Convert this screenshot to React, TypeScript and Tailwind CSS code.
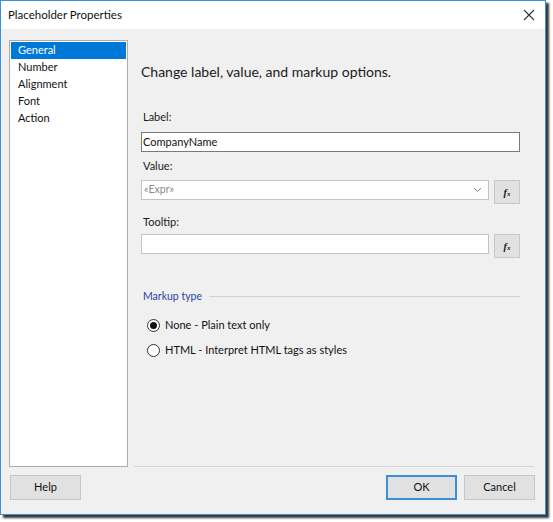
import React from 'react';

const font = { fontFamily: 'Lato, "Noto Sans", sans-serif' };

const FxButton = () => (
  <button className="ml-[5px] w-[26px] h-[24px] bg-[#e1e1e1] border border-[#c8c8c8] flex items-center justify-center">
    <span className="text-[10px] italic font-bold text-[#111]" style={{ fontFamily: '"Liberation Serif", serif' }}>
      f<span className="text-[7px]">x</span>
    </span>
  </button>
);

const Radio = ({ checked, label }: { checked?: boolean; label: string }) => (
  <div className="flex items-center h-[16px]">
    <span className="w-[13px] h-[13px] rounded-full border border-[#333] bg-white flex items-center justify-center">
      {checked && <span className="w-[7px] h-[7px] rounded-full bg-[#111]" />}
    </span>
    <span className="ml-[5px] text-[11px] text-[#111]">{label}</span>
  </div>
);

export default function App() {
  const items = ['General', 'Number', 'Alignment', 'Font', 'Action'];

  return (
    <div className="w-[553px] h-[522px] bg-white" style={font}>
      <div className="w-[546px] h-[515px] border border-[#3d8fd8] flex flex-col shadow-[3px_3px_2px_rgba(20,20,20,0.85)]">
        {/* title bar */}
        <div className="h-[28px] bg-white flex items-center justify-between pl-[7px] pr-[10px]">
          <span className="text-[11.5px] text-[#111]">Placeholder Properties</span>
          <svg width="12" height="12" viewBox="0 0 12 12">
            <path d="M1 1 L11 11 M11 1 L1 11" stroke="#333" strokeWidth="1.1" />
          </svg>
        </div>

        <div className="flex-1 bg-[#f0f0f0] flex flex-col pt-[11px] px-[8px]">
          <div className="flex">
            {/* left nav */}
            <div className="w-[119px] h-[427px] bg-white border border-[#acacac] p-[1px]">
              {items.map((item, i) => (
                <div
                  key={item}
                  className={`h-[17px] pl-[7px] flex items-center text-[11px] ${
                    i === 0 ? 'bg-[#0078d7] text-white' : 'text-[#111]'
                  }`}
                >
                  {item}
                </div>
              ))}
            </div>

            {/* right panel */}
            <div className="ml-[6px] w-[400px] border-b border-[#d5d5d5] pl-[7px] pr-[14px] pt-[22px]">
              <div className="text-[14px] leading-[20px] text-[#1a1a1a]">
                Change label, value, and markup options.
              </div>

              <div className="mt-[27px] text-[11px] leading-[16px] text-[#1a1a1a] pl-[2px]">Label:</div>
              <div className="mt-[7px] h-[20px] bg-white border border-[#7a7a7a] flex items-center px-[1px] text-[11px] text-[#111]">
                CompanyName
              </div>

              <div className="mt-[6px] text-[11px] leading-[16px] text-[#1a1a1a] pl-[2px]">Value:</div>
              <div className="mt-[6px] flex items-start">
                <div className="flex-1 h-[20px] bg-white border border-[#c4c4c4] flex items-center justify-between px-[2px] text-[10.5px] text-[#8c8c8c]">
                  «Expr»
                  <svg width="9" height="6" viewBox="0 0 9 6" className="mr-[4px]">
                    <path d="M1 1 L4.5 4.5 L8 1" fill="none" stroke="#888" strokeWidth="1" />
                  </svg>
                </div>
                <FxButton />
              </div>

              <div className="mt-[10px] text-[11px] leading-[16px] text-[#1a1a1a] pl-[2px]">Tooltip:</div>
              <div className="mt-[4px] flex items-start">
                <div className="flex-1 h-[20px] bg-white border border-[#c4c4c4]" />
                <FxButton />
              </div>

              <div className="mt-[30px] flex items-center">
                <span className="text-[10.5px] leading-[16px] text-[#2e3fa3] pl-[2px]">Markup type</span>
                <div className="flex-1 ml-[7px] border-t border-[#d0d0d0]" />
              </div>

              <div className="mt-[13px] pl-[6px]">
                <Radio checked label="None - Plain text only" />
              </div>
              <div className="mt-[9px] pl-[6px]">
                <Radio label="HTML - Interpret HTML tags as styles" />
              </div>
            </div>
          </div>

          {/* buttons */}
          <div className="mt-[8px] flex items-center pl-[1px] pr-[2px]">
            <button className="w-[71px] h-[25px] bg-[#e1e1e1] border border-[#c6c6c6] text-[11px] text-[#111]">
              Help
            </button>
            <div className="flex-1" />
            <button className="w-[71px] h-[25px] bg-[#e1e1e1] border-2 border-[#3c8fd6] text-[11px] text-[#111]">
              OK
            </button>
            <button className="ml-[7px] w-[71px] h-[25px] bg-[#e1e1e1] border border-[#c6c6c6] text-[11px] text-[#111]">
              Cancel
            </button>
          </div>
        </div>
      </div>
    </div>
  );
}
